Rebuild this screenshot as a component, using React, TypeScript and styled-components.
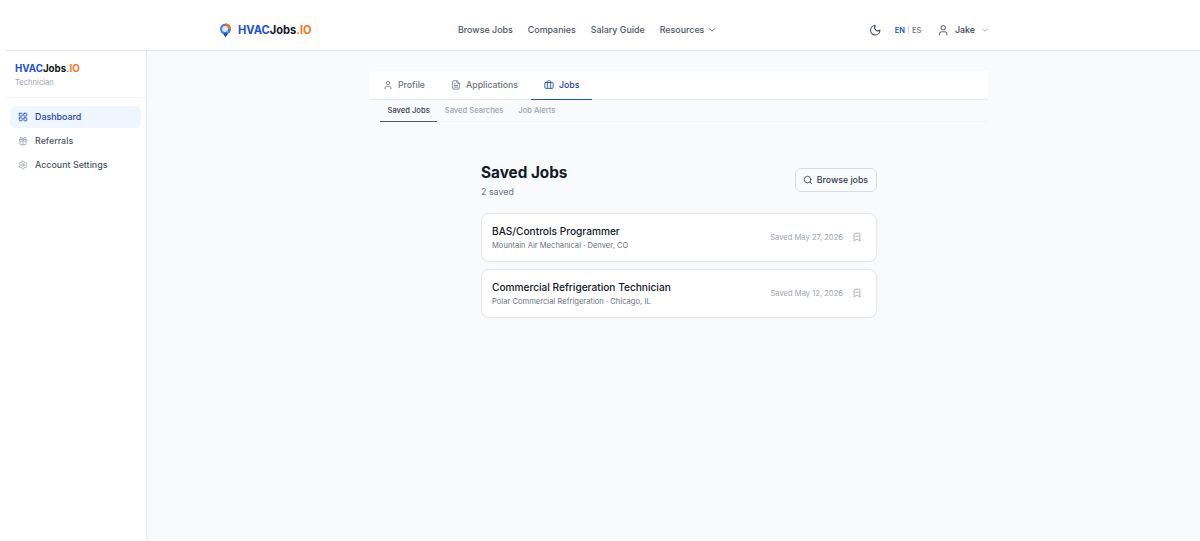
import React from "react";
import styled, { createGlobalStyle } from "styled-components";
import {
  BookmarkMinus,
  Briefcase,
  ChevronDown,
  FileText,
  Gift,
  LayoutGrid,
  Moon,
  Search,
  Settings,
  User,
} from "lucide-react";

const GlobalStyle = createGlobalStyle`
  html, body {
    margin: 0;
    padding: 0;
    height: 100%;
    background: #ffffff;
    font-family: Inter, "Liberation Sans", sans-serif;
    overflow: hidden;
  }
  * {
    box-sizing: border-box;
  }
`;

const Page = styled.div`
  width: 1200px;
  height: 541px;
  display: flex;
  flex-direction: column;
  padding-left: 5px;
  background: #ffffff;
`;

const Header = styled.header`
  height: 51px;
  flex: none;
  display: flex;
  align-items: center;
  padding: 10px 210px 0 214px;
  border-bottom: 1px solid #e5e7eb;
`;

const Brand = styled.div`
  width: 239px;
  flex: none;
  display: flex;
  align-items: center;
  gap: 6px;
`;

const LogoText = styled.span<{ $size: number }>`
  display: block;
  font-size: ${(p) => p.$size}px;
  line-height: 12px;
  font-weight: 700;
  color: #111827;
`;

const Blue = styled.span`
  color: #1d4ed8;
`;

const Orange = styled.span`
  color: #f97316;
`;

const MainNav = styled.nav`
  display: flex;
  align-items: center;
  gap: 15px;
`;

const NavLink = styled.a`
  display: flex;
  align-items: center;
  gap: 3px;
  font-size: 8.9px;
  line-height: 10px;
  font-weight: 500;
  color: #4b5563;
`;

const HeaderRight = styled.div`
  margin-left: auto;
  display: flex;
  align-items: center;
  color: #374151;
`;

const LangSwitch = styled.div`
  display: flex;
  align-items: center;
  gap: 3px;
  margin: 0 16px 0 13px;
  font-size: 7.5px;
  font-weight: 500;
  color: #6b7280;
`;

const LangActive = styled.span`
  color: #1d4ed8;
  font-weight: 600;
`;

const LangDivider = styled.span`
  width: 1px;
  height: 8px;
  background: #d1d5db;
`;

const UserName = styled.span`
  margin: 0 5px;
  font-size: 8.9px;
  line-height: 10px;
  font-weight: 500;
  color: #374151;
`;

const Body = styled.div`
  flex: 1;
  display: flex;
  min-height: 0;
`;

const Sidebar = styled.aside`
  width: 142px;
  flex: none;
  border-right: 1px solid #e5e7eb;
  background: #ffffff;
`;

const SideBrand = styled.div`
  height: 47px;
  padding: 12px 10px 0;
  border-bottom: 1px solid #f3f4f6;
`;

const SideRole = styled.div`
  margin-top: 3px;
  font-size: 7.6px;
  line-height: 10px;
  color: #9ca3af;
`;

const SideNav = styled.nav`
  display: flex;
  flex-direction: column;
  gap: 2px;
  padding: 8px 5px;
`;

const SideItem = styled.a<{ $active?: boolean }>`
  height: 22px;
  display: flex;
  align-items: center;
  gap: 7px;
  padding: 0 8px;
  border-radius: 5px;
  font-size: 8.9px;
  line-height: 10px;
  font-weight: 500;
  color: ${(p) => (p.$active ? "#1e40af" : "#4b5563")};
  background: ${(p) => (p.$active ? "#eff6ff" : "transparent")};
  svg {
    color: ${(p) => (p.$active ? "#1d4ed8" : "#9ca3af")};
  }
`;

const Main = styled.main`
  flex: 1;
  min-width: 0;
  background: #f9fafb;
  padding: 20px 212px 0 223px;
`;

const Tabs = styled.div`
  height: 29px;
  display: flex;
  align-items: stretch;
  background: #ffffff;
  border-bottom: 1px solid #e5e7eb;
`;

const Tab = styled.a<{ $active?: boolean }>`
  display: flex;
  align-items: center;
  gap: 5px;
  padding: 0 13px;
  margin-bottom: -1px;
  font-size: 8.75px;
  font-weight: 500;
  color: ${(p) => (p.$active ? "#1e40af" : "#6b7280")};
  border-bottom: 1.5px solid ${(p) => (p.$active ? "#1d4ed8" : "transparent")};
`;

const SubTabs = styled.div`
  height: 22px;
  display: flex;
  margin: 0 1px 0 10px;
  border-bottom: 1px solid #f3f4f6;
`;

const SubTab = styled.a<{ $active?: boolean }>`
  display: flex;
  align-items: center;
  padding: 0 7.5px;
  margin-bottom: -1px;
  font-size: 7.6px;
  font-weight: 500;
  color: ${(p) => (p.$active ? "#374151" : "#9ca3af")};
  border-bottom: 1.5px solid ${(p) => (p.$active ? "#4b5563" : "transparent")};
`;

const Content = styled.section`
  width: 396px;
  margin: 40px 0 0 111px;
`;

const TitleRow = styled.div`
  display: flex;
  align-items: flex-start;
  justify-content: space-between;
  margin-bottom: 15px;
`;

const Title = styled.h1`
  margin: 0;
  font-size: 15.3px;
  line-height: 22px;
  font-weight: 700;
  color: #111827;
`;

const Count = styled.div`
  margin-top: 2px;
  font-size: 8.9px;
  line-height: 12px;
  color: #6b7280;
`;

const BrowseButton = styled.button`
  height: 24px;
  margin-top: 6px;
  display: flex;
  align-items: center;
  gap: 4px;
  padding: 0 8px 0 7px;
  border: 1px solid #d9dce1;
  border-radius: 6px;
  background: #f9fafb;
  font-family: inherit;
  font-size: 8.75px;
  font-weight: 500;
  color: #374151;
`;

const JobList = styled.div`
  display: flex;
  flex-direction: column;
  gap: 7px;
`;

const JobCard = styled.article`
  height: 49px;
  display: flex;
  align-items: center;
  justify-content: space-between;
  padding: 0 14px 0 10px;
  background: #ffffff;
  border: 1px solid #e5e7eb;
  border-radius: 8px;
  box-shadow: 0 1px 1px rgba(0, 0, 0, 0.02);
`;

const JobTitle = styled.div`
  font-size: 10.15px;
  line-height: 14px;
  font-weight: 500;
  color: #111827;
`;

const JobMeta = styled.div`
  margin-top: 2px;
  font-size: 7.6px;
  line-height: 11px;
  color: #6b7280;
`;

const JobRight = styled.div`
  display: flex;
  align-items: center;
  gap: 9px;
  color: #9ca3af;
  svg {
    margin-bottom: 1px;
  }
`;

const SavedDate = styled.span`
  font-size: 7.6px;
  color: #9ca3af;
`;

const jobs = [
  {
    title: "BAS/Controls Programmer",
    meta: "Mountain Air Mechanical · Denver, CO",
    saved: "Saved May 27, 2026",
  },
  {
    title: "Commercial Refrigeration Technician",
    meta: "Polar Commercial Refrigeration · Chicago, IL",
    saved: "Saved May 12, 2026",
  },
];

function PinLogo() {
  return (
    <svg width="13" height="15" viewBox="0 0 13 15">
      <circle cx="6.5" cy="6" r="5.5" fill="#3b82f6" />
      <path d="M6.5 0.5a5.5 5.5 0 0 1 5.5 5.5H6.5z" fill="#f97316" />
      <circle cx="6" cy="6" r="3" fill="#dbeafe" />
      <path d="M4.2 10.5h4.6L6.5 14.5z" fill="#1e3a8a" />
    </svg>
  );
}

export default function App() {
  return (
    <Page>
      <GlobalStyle />
      <Header>
        <Brand>
          <PinLogo />
          <LogoText $size={11.1}>
            <Blue>HVAC</Blue>Jobs<Orange>.IO</Orange>
          </LogoText>
        </Brand>
        <MainNav>
          <NavLink>Browse Jobs</NavLink>
          <NavLink>Companies</NavLink>
          <NavLink>Salary Guide</NavLink>
          <NavLink>
            Resources <ChevronDown size={10} />
          </NavLink>
        </MainNav>
        <HeaderRight>
          <Moon size={12.5} />
          <LangSwitch>
            <LangActive>EN</LangActive>
            <LangDivider />
            <span>ES</span>
          </LangSwitch>
          <User size={12.5} color="#6b7280" />
          <UserName>Jake</UserName>
          <ChevronDown size={10} color="#9ca3af" />
        </HeaderRight>
      </Header>
      <Body>
        <Sidebar>
          <SideBrand>
            <LogoText $size={9.75}>
              <Blue>HVAC</Blue>Jobs<Orange>.IO</Orange>
            </LogoText>
            <SideRole>Technician</SideRole>
          </SideBrand>
          <SideNav>
            <SideItem $active>
              <LayoutGrid size={10} />
              Dashboard
            </SideItem>
            <SideItem>
              <Gift size={10} />
              Referrals
            </SideItem>
            <SideItem>
              <Settings size={10} />
              Account Settings
            </SideItem>
          </SideNav>
        </Sidebar>
        <Main>
          <Tabs>
            <Tab>
              <User size={10} />
              Profile
            </Tab>
            <Tab>
              <FileText size={10} />
              Applications
            </Tab>
            <Tab $active>
              <Briefcase size={10} />
              Jobs
            </Tab>
          </Tabs>
          <SubTabs>
            <SubTab $active>Saved Jobs</SubTab>
            <SubTab>Saved Searches</SubTab>
            <SubTab>Job Alerts</SubTab>
          </SubTabs>
          <Content>
            <TitleRow>
              <div>
                <Title>Saved Jobs</Title>
                <Count>2 saved</Count>
              </div>
              <BrowseButton>
                <Search size={10} />
                Browse jobs
              </BrowseButton>
            </TitleRow>
            <JobList>
              {jobs.map((job) => (
                <JobCard key={job.title}>
                  <div>
                    <JobTitle>{job.title}</JobTitle>
                    <JobMeta>{job.meta}</JobMeta>
                  </div>
                  <JobRight>
                    <SavedDate>{job.saved}</SavedDate>
                    <BookmarkMinus size={10} />
                  </JobRight>
                </JobCard>
              ))}
            </JobList>
          </Content>
        </Main>
      </Body>
    </Page>
  );
}
